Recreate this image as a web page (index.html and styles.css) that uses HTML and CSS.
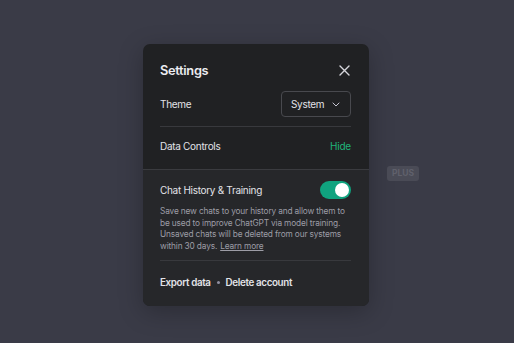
FILE: index.html
```html
<!DOCTYPE html>
<html lang="en">
<head>
    <meta charset="UTF-8">
    <meta name="viewport" content="width=device-width, initial-scale=1.0">
    <title>Settings</title>
    <link rel="stylesheet" href="styles.css">
</head>
<body>
<span class="plus-badge">PLUS</span>
<div class="modal">
    <div class="modal-top">
        <div class="modal-header">
            <h2>Settings</h2>
            <button class="close-btn" aria-label="Close">
                <svg width="11" height="11" viewBox="0 0 11 11"><path d="M1 1 L10 10 M10 1 L1 10" stroke="#d6d6dc" stroke-width="1.4" stroke-linecap="round"/></svg>
            </button>
        </div>
        <div class="row theme-row">
            <span class="label">Theme</span>
            <div class="select">
                <span>System</span>
                <svg width="8" height="5" viewBox="0 0 8 5"><path d="M0.7 0.7 L4 4 L7.3 0.7" stroke="#c5c5d2" stroke-width="1" fill="none"/></svg>
            </div>
        </div>
        <div class="row data-row">
            <span class="label">Data Controls</span>
            <a class="hide-link" href="#">Hide</a>
        </div>
    </div>
    <div class="modal-bottom">
        <div class="row toggle-row">
            <span class="label">Chat History &amp; Training</span>
            <span class="toggle"><span class="knob"></span></span>
        </div>
        <p class="desc">Save new chats to your history and allow them to be used to improve ChatGPT via model training. Unsaved chats will be deleted from our systems within 30 days.<a href="#">Learn more</a></p>
        <div class="footer">
            <a href="#">Export data</a>
            <span class="dot"></span>
            <a href="#">Delete account</a>
        </div>
    </div>
</div>
</body>
</html>
```

FILE: styles.css
```css
body {
    margin: 0;
    padding: 44px 0 0 143px;
    height: 343px;
    box-sizing: border-box;
    background-color: #3a3b47;
    font-family: 'Inter', 'Liberation Sans', sans-serif;
    color: #ececf1;
    display: flex;
    align-items: flex-start;
    overflow: hidden;
}
.plus-badge {
    position: absolute;
    left: 387px;
    top: 166px;
    width: 32px;
    height: 15px;
    border-radius: 3px;
    background: #4a4b56;
    color: #60616c;
    font-size: 8.5px;
    font-weight: 700;
    line-height: 15px;
    text-align: center;
}
.modal {
    width: 226px;
    background: #202123;
    border-radius: 7px;
    overflow: hidden;
    box-shadow: 0 6px 24px rgba(0, 0, 0, 0.25);
}
.modal-top {
    padding: 16px 18px 5px 17px;
    border-bottom: 1px solid #3a3b3f;
}
.modal-bottom {
    background: #26272a;
    padding: 10px 18px 3px 17px;
}
.modal-header {
    display: flex;
    justify-content: space-between;
    align-items: center;
    height: 20px;
}
.modal-header h2 {
    margin: 0;
    font-size: 12.8px;
    font-weight: 600;
    letter-spacing: -0.3px;
    color: #ececf1;
}
.close-btn {
    background: none;
    border: none;
    padding: 0;
    margin-right: 1px;
    display: flex;
}
.row {
    display: flex;
    justify-content: space-between;
    align-items: center;
}
.label {
    font-size: 10px;
    letter-spacing: -0.3px;
    color: #e3e3e8;
}
.theme-row {
    margin-top: 11px;
    height: 26px;
    padding-bottom: 9px;
    border-bottom: 1px solid #38393d;
}
.select {
    width: 70px;
    height: 26px;
    box-sizing: border-box;
    border: 1px solid #48494e;
    border-radius: 4px;
    display: flex;
    align-items: center;
    justify-content: space-between;
    padding: 0 10px 0 9px;
    font-size: 10px;
    letter-spacing: -0.3px;
    color: #e3e3e8;
}
.data-row {
    height: 37px;
}
.hide-link {
    font-size: 10px;
    letter-spacing: -0.2px;
    color: #1fb57a;
    text-decoration: none;
}
.toggle-row {
    height: 20px;
}
.toggle {
    width: 31px;
    height: 18px;
    border-radius: 9px;
    background: #10a37f;
    display: flex;
    align-items: center;
    justify-content: flex-end;
    padding: 0 2px;
    box-sizing: border-box;
}
.knob {
    width: 14px;
    height: 14px;
    border-radius: 50%;
    background: #ffffff;
}
.desc {
    margin: 6px 0 0;
    font-size: 8.3px;
    letter-spacing: -0.15px;
    line-height: 11.5px;
    color: #9d9da6;
}
.desc a {
    margin-left: 3px;
    color: #9d9da6;
    text-decoration: underline;
}
.footer {
    margin-top: 8px;
    border-top: 1px solid #38393d;
    height: 42px;
    display: flex;
    align-items: center;
    gap: 5px;
}
.footer a {
    font-size: 9.8px;
    font-weight: 600;
    letter-spacing: -0.35px;
    color: #e3e3e8;
    text-decoration: none;
}
.dot {
    width: 3px;
    height: 3px;
    border-radius: 50%;
    background: #8e8ea0;
    margin: 0 1px;
}
```
